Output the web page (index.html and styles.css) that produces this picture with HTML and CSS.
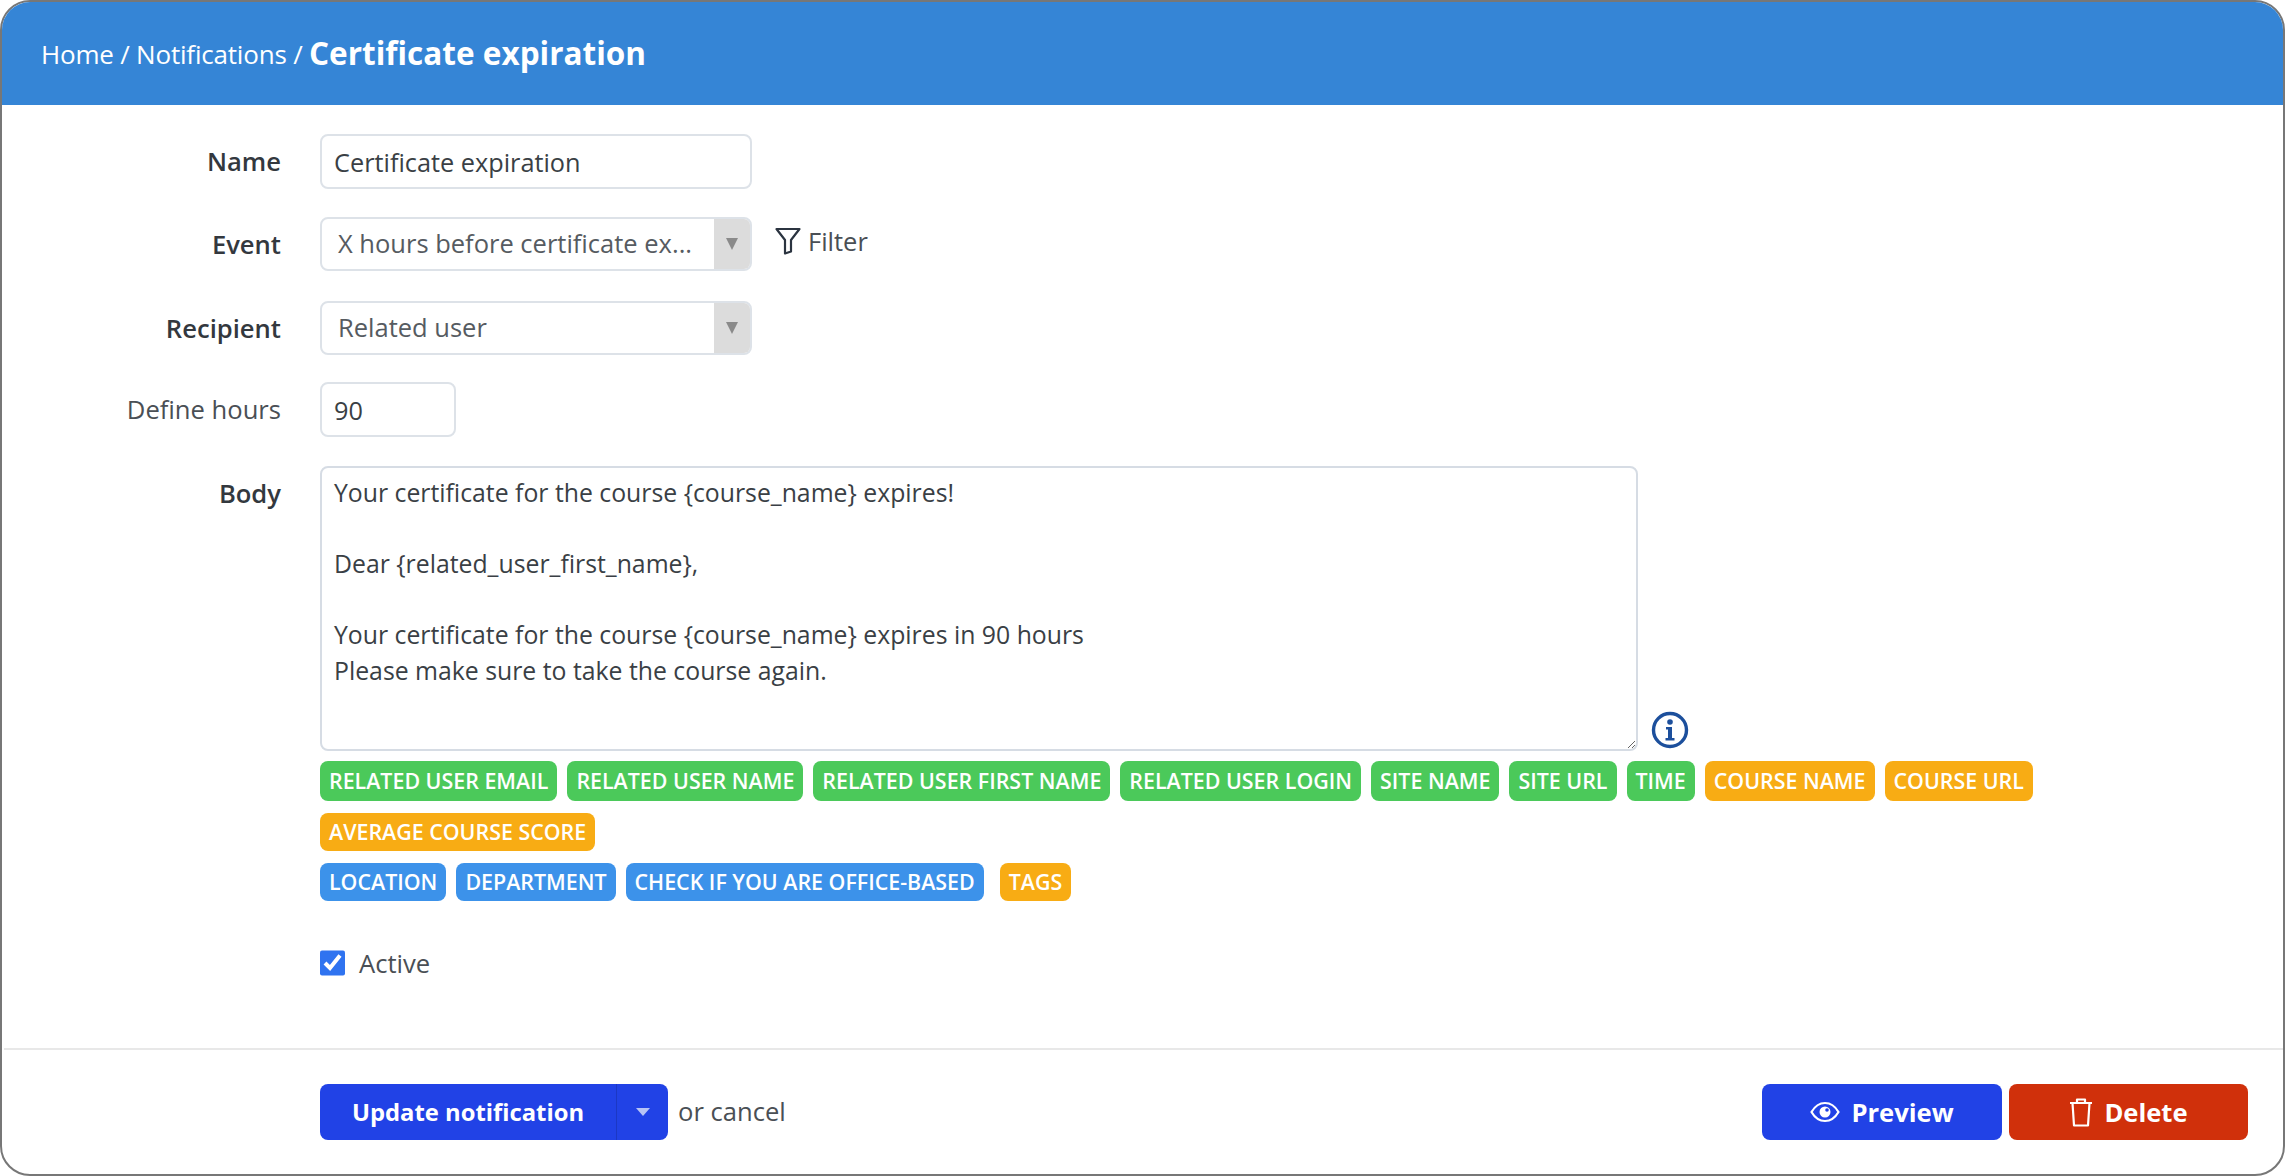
FILE: index.html
```html
<!DOCTYPE html>
<html lang="en">
<head>
<meta charset="utf-8">
<title>Certificate expiration</title>
<link rel="stylesheet" href="styles.css">
</head>
<body>
<main class="card">
  <header class="head">
    <span class="crumbs">Home / Notifications / </span><strong class="title">Certificate expiration</strong>
  </header>
  <form class="form">
    <div class="row row-name">
      <label class="label strong">Name</label>
      <input class="input wide" type="text" value="Certificate expiration">
    </div>
    <div class="row row-event">
      <label class="label strong">Event</label>
      <div class="select"><span class="select-text">X hours before certificate ex...</span><span class="select-arrow"><i class="tri"></i></span></div>
      <span class="filter">
        <svg class="filter-icon" viewBox="0 0 26 28" width="26" height="28"><path d="M1.5 2h23L16 13v11.5l-6 2V13z" fill="none" stroke="#2b3440" stroke-width="2.2" stroke-linejoin="round"/></svg>
        Filter
      </span>
    </div>
    <div class="row row-recipient">
      <label class="label strong">Recipient</label>
      <div class="select"><span class="select-text">Related user</span><span class="select-arrow"><i class="tri"></i></span></div>
    </div>
    <div class="row row-hours">
      <label class="label">Define hours</label>
      <input class="input narrow" type="text" value="90">
    </div>
    <div class="row row-body">
      <label class="label strong">Body</label>
      <div class="body-wrap">
        <textarea class="textarea">Your certificate for the course {course_name} expires!

Dear {related_user_first_name},

Your certificate for the course {course_name} expires in 90 hours
Please make sure to take the course again.</textarea>
        <svg class="info" viewBox="0 0 38 38" width="38" height="38"><circle cx="19" cy="19" r="16.5" fill="none" stroke="#1c4f9c" stroke-width="3.4"/><circle cx="19" cy="11" r="2.8" fill="#1c4f9c"/><path d="M15 16h6v11h2.5v2.5h-9V27H17v-8.500h-2z" fill="#1c4f9c"/></svg>
      </div>
    </div>
    <div class="tags-block">
      <div class="tags tags-first">
        <span class="tag green">Related user email</span>
        <span class="tag green">Related user name</span>
        <span class="tag green">Related user first name</span>
        <span class="tag green">Related user login</span>
        <span class="tag green">Site name</span>
        <span class="tag green">Site URL</span>
        <span class="tag green">Time</span>
        <span class="tag orange">Course name</span>
        <span class="tag orange">Course URL</span>
      </div>
      <div class="tags">
        <span class="tag orange">Average course score</span>
      </div>
      <div class="tags">
        <span class="tag blue">Location</span>
        <span class="tag blue">Department</span>
        <span class="tag blue">Check if you are office-based</span>
        <span class="tag orange tag-gap">Tags</span>
      </div>
    </div>
    <label class="active"><input class="check" type="checkbox" checked> Active</label>
  </form>
  <footer class="foot">
    <div class="foot-left">
      <div class="split">
        <button class="btn split-main" type="button">Update notification</button>
        <button class="btn split-caret" type="button" aria-label="More"><i class="tri tri-light"></i></button>
      </div>
      <span class="cancel">or cancel</span>
    </div>
    <div class="foot-right">
      <button class="btn action blue-btn" type="button">
        <svg viewBox="0 0 30 22" width="30" height="22"><path d="M1.500 11C5 5 9.500 2 15 2s10 3 13.500 9C25 17 20.500 20 15 20S5 17 1.500 11z" fill="none" stroke="#fff" stroke-width="2.200"/><circle cx="15" cy="11" r="5.500" fill="#fff"/><circle cx="17" cy="9" r="1.800" fill="#2142e6"/></svg>
        Preview
      </button>
      <button class="btn action red-btn" type="button">
        <svg viewBox="0 0 24 30" width="24" height="30"><path d="M1 6h22M8 6V2.500h8V6M3.500 6l1.500 22.500h14L20.500 6" fill="none" stroke="#fff" stroke-width="2.200" stroke-linejoin="round"/></svg>
        Delete
      </button>
    </div>
  </footer>
</main>
</body>
</html>
```
FILE: styles.css
```css
* { box-sizing: border-box; }
html, body { margin: 0; padding: 0; background: #fff; }
body { font-family: "Open Sans", "Liberation Sans", sans-serif; color: #3a3f45; }
.card {
  width: 2285px; height: 1176px; background: #fff;
  border: 2px solid #777; border-radius: 30px; overflow: hidden;
  display: flex; flex-direction: column;
}
.head {
  height: 103px; background: #3585d6; color: #fff;
  padding: 0 0 0 39px; display: flex; align-items: center; white-space: pre;
}
.crumbs { font-size: 26px; letter-spacing: -0.2px; }
.title { font-size: 31.5px; font-weight: 700; margin-top: -3px; }
.form { flex: 1; padding-top: 29px; display: flex; flex-direction: column; }
.row { display: grid; grid-template-columns: 279px auto; column-gap: 39px; justify-content: start; align-items: start; }
.row-event { grid-template-columns: 279px 432px auto; margin-top: 28px; }
.row-recipient { margin-top: 29px; }
.row-hours { margin-top: 26px; }
.row-body { margin-top: 29px; }
.label { font-size: 25.6px; line-height: 55px; text-align: right; color: #4a4f55; }
.label.strong { font-weight: 600; color: #33383e; }
.input, .select, .textarea {
  border: 2px solid #dde2e8; border-radius: 8px; background: #fff;
  font-family: inherit; color: #3a3f45;
}
.input { height: 55px; padding: 0 12px; outline: none; display: block; font-size: 25.3px; }
.wide { width: 432px; }
.narrow { width: 136px; }
.select { width: 432px; height: 54px; display: flex; align-items: stretch; overflow: hidden; font-size: 25.5px; }
.select-text { flex: 1; padding-left: 16px; line-height: 48px; color: #565b61; white-space: nowrap; }
.select-arrow { width: 36px; background: #dcdcdc; display: flex; align-items: center; justify-content: center; }
.tri { display: block; width: 0; height: 0; border-left: 6px solid transparent; border-right: 6px solid transparent; border-top: 12px solid #8a8a8a; }
.filter { display: flex; align-items: center; gap: 7px; font-size: 25.5px; color: #4a4f55; height: 48px; margin-left: -16px; }
.filter-icon { flex: none; }
.body-wrap { display: flex; align-items: flex-end; gap: 13px; }
.textarea {
  display: block; width: 1318px; height: 285px; padding: 7px 12px; line-height: 35.500px; font-size: 24.800px;
  outline: none; resize: both; overflow: hidden; margin: 0; border-color: #d6dce4;
}
.info { margin-bottom: 2px; }
.tags-block { margin-left: 318px; margin-top: 10px; display: flex; flex-direction: column; gap: 12px; }
.tags { display: flex; gap: 10px; }
.tag {
  height: 38px; padding: 0 9px; border-radius: 8px; color: #fff;
  font-size: 21.400px; font-weight: 600; line-height: 38px; text-transform: uppercase; white-space: nowrap;
}
.tags-first .tag { height: 40px; line-height: 40px; }
.green { background: #4bc95a; }
.orange { background: #f8ac14; }
.blue { background: #3c92ea; }
.tag-gap { margin-left: 6px; }
.active { margin: 49px 0 0 318px; display: flex; align-items: center; gap: 14px; font-size: 25.600px; color: #4a4f55; height: 26px; }
.check { width: 25px; height: 26px; margin: 0; accent-color: #2f73f0; }
.foot {
  height: 126px; margin-left: 2px; border-top: 2px solid #e8e8e8;
  display: flex; justify-content: space-between; padding: 34px 35px 0 316px;
}
.foot-left, .foot-right { display: flex; align-items: flex-start; }
.foot-left { gap: 10px; }
.foot-right { gap: 7px; }
.btn { height: 56px; border: 0; color: #fff; font-family: inherit; font-size: 25.600px; font-weight: 700; padding: 0; }
.split { display: flex; }
.split-main { width: 297px; background: #2142e6; border-radius: 8px 0 0 8px; border-right: 1px solid #1c38c4; font-size: 23.800px; }
.split-caret { width: 51px; background: #2142e6; border-radius: 0 8px 8px 0; display: flex; align-items: center; justify-content: center; }
.tri-light { border-top-color: #b8c4f5; border-left-width: 7px; border-right-width: 7px; border-top-width: 8px; }
.cancel { font-size: 25.600px; line-height: 56px; color: #4a4f55; }
.action { display: flex; align-items: center; justify-content: center; gap: 11px; border-radius: 8px; width: 240px; }
.blue-btn { background: #2142e6; }
.red-btn { background: #d0300b; width: 239px; }
```
